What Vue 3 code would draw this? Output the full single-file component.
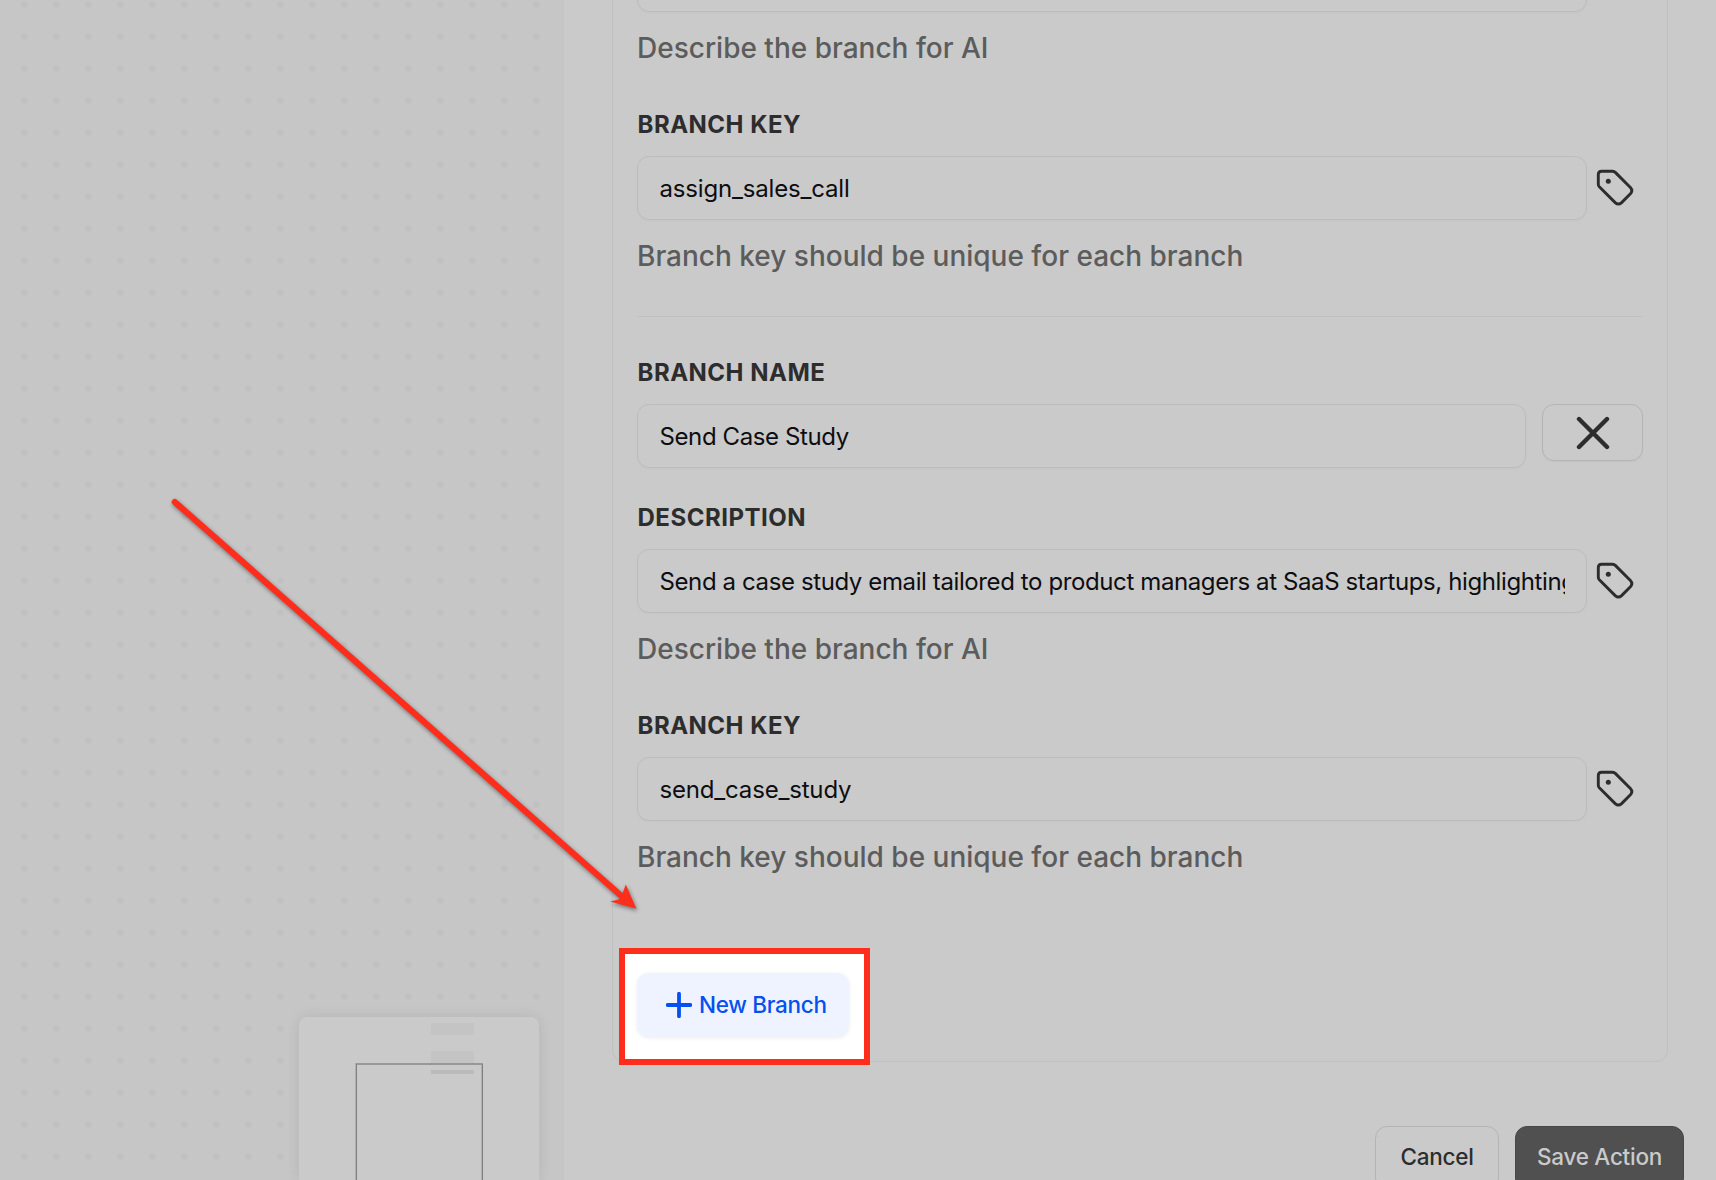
<template>
  <div class="page">
    <aside class="canvas">
      <svg class="minimap" width="240" height="163" viewBox="0 0 240 163">
        <rect x="132" y="6" width="43" height="12" fill="#c4c4c4" />
        <rect x="132" y="34" width="43" height="12" fill="#c4c4c4" />
        <rect x="132" y="53" width="43" height="4" fill="#bababa" />
        <path d="M56 46H184V48H56Z" fill="#989898" />
        <path d="M56 46H57V163H56ZM183 48H182V163H183Z" fill="#b0b0b0" />
        <path d="M57 47H58V163H57ZM183 47H184V163H183Z" fill="#808080" />
      </svg>
    </aside>

    <main class="panel">
      <div class="card">
        <template v-for="(branch, i) in branches" :key="branch.key">
          <hr v-if="i > 0" class="divider" />
          <section class="branch">
            <div v-if="branch.name" class="field name-field">
              <label>Branch Name</label>
              <div class="row name-row">
                <input type="text" v-model="branch.name" />
                <button class="remove" aria-label="Remove branch">
                  <svg width="34" height="34" viewBox="0 0 34 34">
                    <path d="M3 3L31 31M31 3L3 31" stroke="currentColor" stroke-width="4.4" stroke-linecap="round" />
                  </svg>
                </button>
              </div>
            </div>
            <div v-for="field in fields" :key="field.id" class="field">
              <label v-if="i > 0 || field.id !== 'description'">{{ field.label }}</label>
              <div class="row">
                <input type="text" v-model="branch[field.id]" :class="field.id" />
                <svg class="tag" width="56" height="64" viewBox="0 0 56 64">
                  <path d="M14.6 15.3H25.6Q27.2 15.3 28.3 16.4L43.4 31.5Q46.2 34.6 43.4 37.7L34.6 46.6Q31.4 49.6 28.2 46.6L12.3 30.8Q11.3 29.8 11.3 28.2V18.6Q11.3 15.3 14.6 15.3Z" />
                  <circle cx="21.3" cy="25.3" r="2.5" />
                </svg>
              </div>
              <p class="hint">{{ field.hint }}</p>
            </div>
          </section>
        </template>

        <button class="new-branch">
          <svg width="26" height="26" viewBox="0 0 26 26">
            <path d="M13 1.7V24.3M1.7 13H24.3" stroke="currentColor" stroke-width="3.8" stroke-linecap="round" />
          </svg>
          <span>New Branch</span>
        </button>
      </div>

      <footer class="actions">
        <button class="btn">Cancel</button>
        <button class="btn btn-primary">Save Action</button>
      </footer>
    </main>

    <svg class="arrow" width="1716" height="1180" viewBox="0 0 1716 1180">
      <path d="M174.8 502L622 896.5" stroke="#ff2d1b" stroke-width="6.2" stroke-linecap="round" />
      <path d="M636.4 908.8L610.2 901.5L618.8 899.4L622.8 892.8L625.8 884.5Z" fill="#ff2d1b" />
    </svg>
  </div>
</template>

<script setup>
import { ref } from 'vue'

const fields = [
  { id: 'description', label: 'Description', hint: 'Describe the branch for AI' },
  { id: 'key', label: 'Branch Key', hint: 'Branch key should be unique for each branch' },
]

const branches = ref([
  { name: '', description: '', key: 'assign_sales_call' },
  {
    name: 'Send Case Study',
    description: 'Send a case study email tailored to product managers at SaaS startups, highlighting results',
    key: 'send_case_study',
  },
])
</script>

<style>
body { margin: 0; overflow: hidden; }
</style>

<style scoped>
.page { position: relative; display: flex; width: 1716px; height: 1180px; overflow: hidden; background: #cacaca; color: #2d2d2d; font-family: Inter, sans-serif; }
* { box-sizing: border-box; }

.canvas {
  flex: 0 0 564px;
  display: flex;
  align-items: flex-end;
  justify-content: flex-end;
  padding-right: 25px;
  background: radial-gradient(circle at 16px 16px, #c0c0c0 2.7px, transparent 3.5px) 8.3px -11.5px / 32px 32px #c6c6c6;
}
.minimap { display: block; background: #cacaca; border-radius: 8px 8px 0 0; box-shadow: 0 0 14px rgba(0,0,0,0.09) }

.panel { flex: 1; min-width: 0; padding: 0 48px; }
/* the list is scrolled, so the card starts above the fold */
.card { height: 1114px; margin-top: -52px; padding: 0 24px; border: 1px solid #c0c0c0; border-top: 0; border-radius: 0 0 12px 12px; }
.branch { display: flex; flex-direction: column; gap: 40px; }
.name-field { margin-bottom: -7px; }
.field label { display: block; margin-bottom: 15px; padding: 1px 0 0 0.5px; font-size: 24px; line-height: 32px; font-weight: 700; letter-spacing: 0.5px; text-transform: uppercase; }
.row { display: flex; }
.name-row { gap: 16px; }
input {
  flex: 1;
  min-width: 0;
  height: 64px;
  padding: 0 21px 0 21.5px;
  border: 1px solid #bcbcbc;
  border-radius: 12px;
  background: transparent;
  color: #0d0e10;
  font: 400 24px/32px Inter, sans-serif;
  letter-spacing: -0.39px;
  box-shadow: 0 1px 2px rgba(0,0,0,0.03);
}
input.key { letter-spacing: -0.18px; }
.hint { margin: 16px 0 0; color: #5c5c5c; font-size: 28px; line-height: 40px; font-weight: 500; white-space: nowrap; }
.divider { height: 1px; margin: 40px 0 39px; border: 0; background: #c0c0c0; }
.tag { flex: none; fill: none; stroke: #2d2d2d; stroke-width: 2.9; }
.tag circle { fill: #2d2d2d; stroke: none; }

button { font-family: Inter, sans-serif; }
.remove { display: flex; align-items: center; justify-content: center; width: 101px; height: 57px; padding: 0; border: 1px solid #b4b4b4; border-radius: 12px; background: transparent; color: #2d2d2d; box-shadow: 0 1px 2px rgba(0,0,0,0.04); }

.new-branch {
  display: flex;
  align-items: center;
  gap: 7px;
  width: 212px;
  height: 64px;
  margin-top: 96px;
  padding: 0 0 0 29px;
  border: 0;
  border-radius: 12px;
  color: #0650f0;
  font-size: 22.5px;
  font-weight: 500;
  letter-spacing: -0.3px;
  white-space: nowrap;
  background: transparent;
  position: relative;
  isolation: isolate;
}
.new-branch span { padding-bottom: 2px; }
/* red highlight frame with a white gap, drawn under the button face */
.new-branch::before { content: ''; position: absolute; z-index: -2; inset: -25px -21px -28px -18px; border: 6px solid #ff2d1b; background: #fff; }
.new-branch::after { content: ''; position: absolute; z-index: -1; inset: 0; border-radius: 12px; background: #eff3ff; box-shadow: 0 1px 4px rgba(0,0,0,0.08); }

.actions { display: flex; justify-content: flex-end; gap: 16px; margin: 64px -16px 0 0; }
.btn { width: 124px; height: 64px; padding: 0 0 4px; border: 1px solid #b4b4b4; border-radius: 12px; background: transparent; color: #2d2d2d; font-size: 22.5px; font-weight: 500; letter-spacing: -0.25px; white-space: nowrap; }
.btn-primary { width: 169px; border-color: #484848; background: #505050; color: #cacaca; }

.arrow { position: absolute; inset: 0; pointer-events: none; fill: none; filter: drop-shadow(1px 2px 2px rgba(0,0,0,0.45)); }
</style>
